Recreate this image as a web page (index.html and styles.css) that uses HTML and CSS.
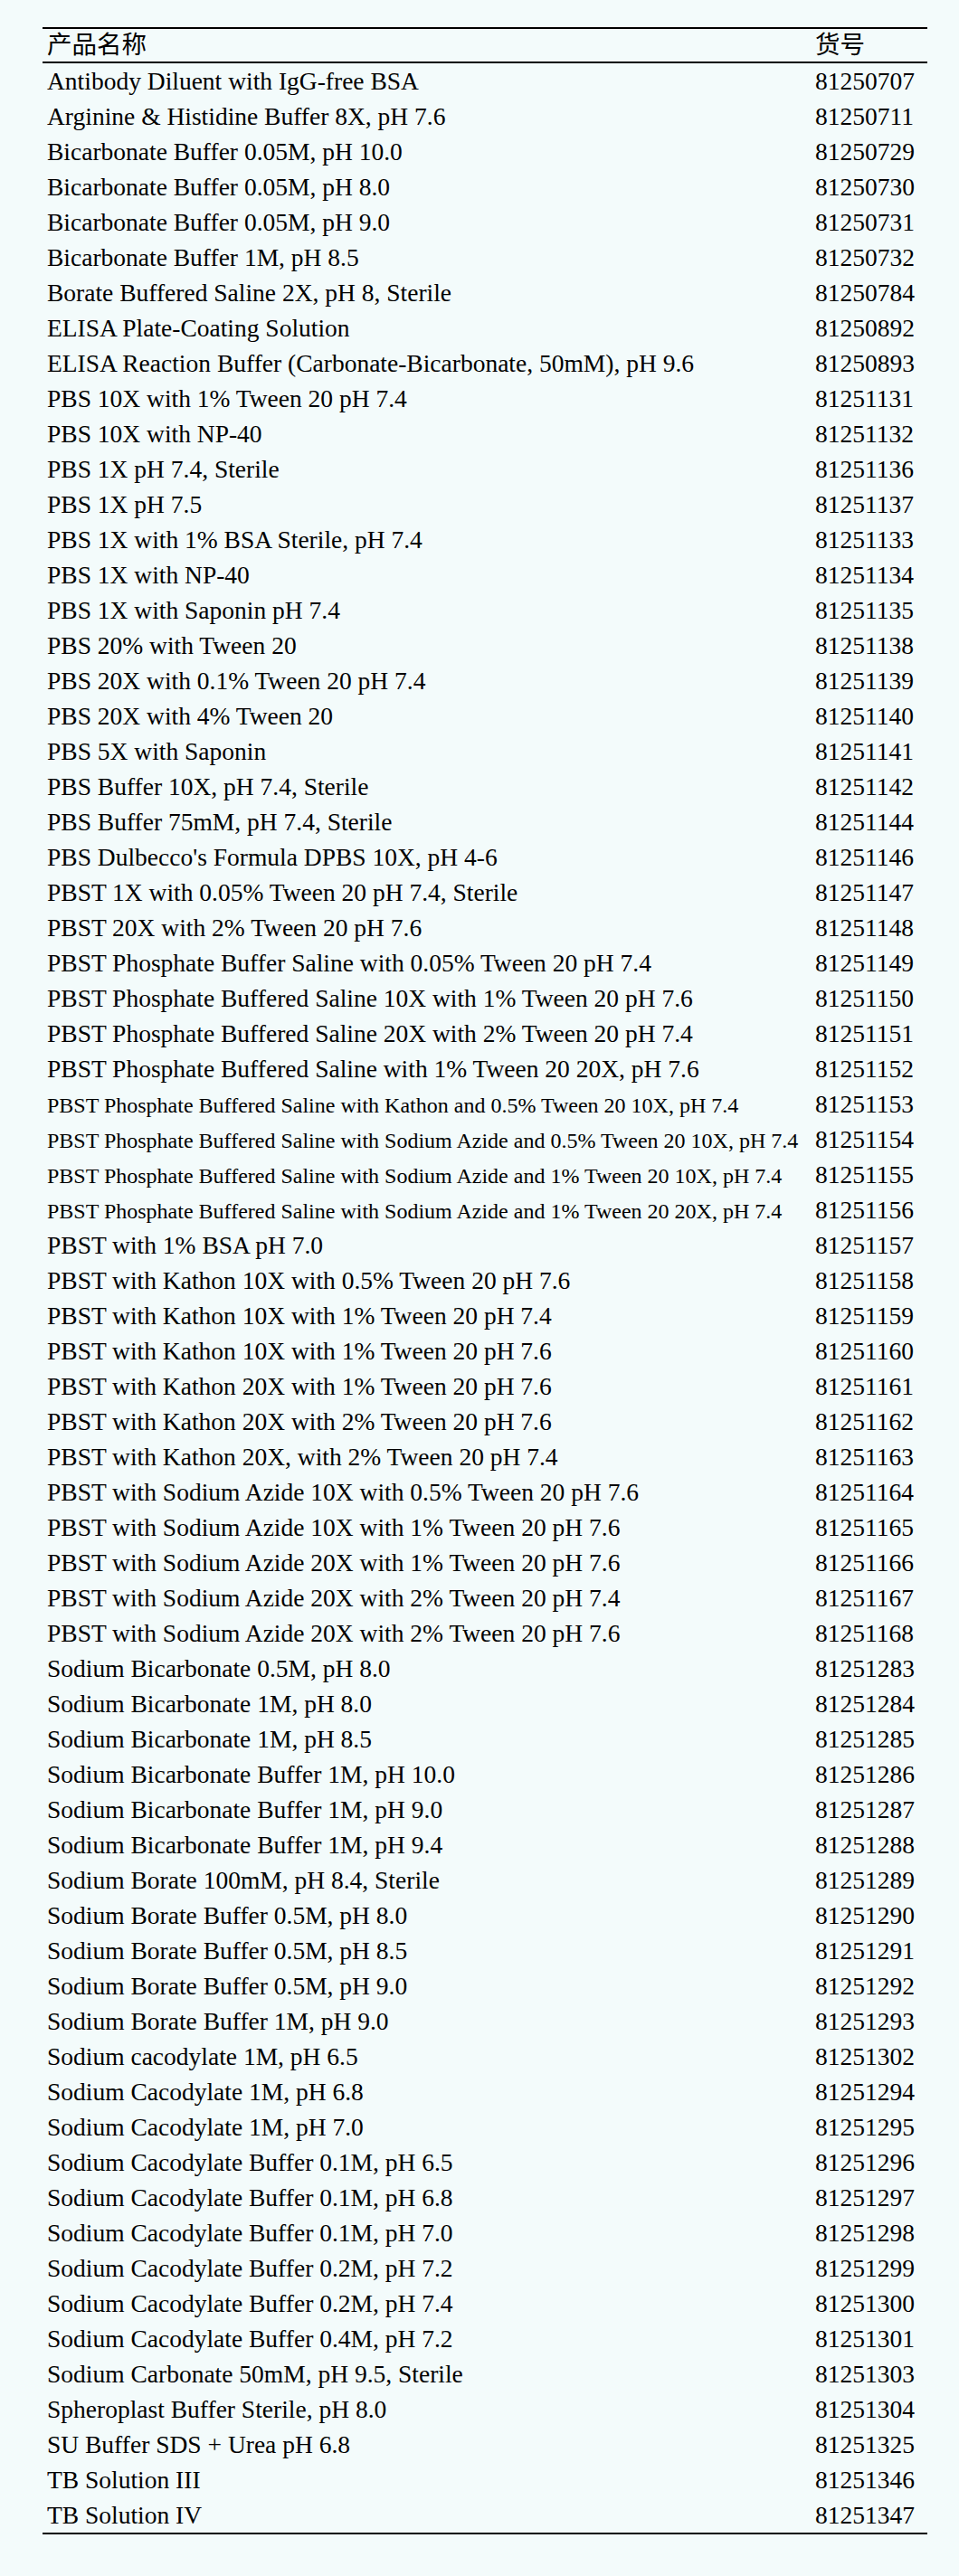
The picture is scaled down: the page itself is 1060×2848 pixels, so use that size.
FILE: index.html
```html
<!DOCTYPE html>
<html lang="zh-CN">
<head>
<meta charset="utf-8">
<title>产品列表</title>
<link rel="stylesheet" href="styles.css">
</head>
<body>
<table class="product-table">
  <colgroup>
    <col class="col-name">
    <col class="col-code">
  </colgroup>
  <thead>
    <tr><th>产品名称</th><th>货号</th></tr>
  </thead>
  <tbody>
    <tr><td>Antibody Diluent with IgG-free BSA</td><td>81250707</td></tr>
    <tr><td>Arginine &amp; Histidine Buffer 8X, pH 7.6</td><td>81250711</td></tr>
    <tr><td>Bicarbonate Buffer 0.05M, pH 10.0</td><td>81250729</td></tr>
    <tr><td>Bicarbonate Buffer 0.05M, pH 8.0</td><td>81250730</td></tr>
    <tr><td>Bicarbonate Buffer 0.05M, pH 9.0</td><td>81250731</td></tr>
    <tr><td>Bicarbonate Buffer 1M, pH 8.5</td><td>81250732</td></tr>
    <tr><td>Borate Buffered Saline 2X, pH 8, Sterile</td><td>81250784</td></tr>
    <tr><td>ELISA Plate-Coating Solution</td><td>81250892</td></tr>
    <tr><td>ELISA Reaction Buffer (Carbonate-Bicarbonate, 50mM), pH 9.6</td><td>81250893</td></tr>
    <tr><td>PBS 10X with 1% Tween 20 pH 7.4</td><td>81251131</td></tr>
    <tr><td>PBS 10X with NP-40</td><td>81251132</td></tr>
    <tr><td>PBS 1X pH 7.4, Sterile</td><td>81251136</td></tr>
    <tr><td>PBS 1X pH 7.5</td><td>81251137</td></tr>
    <tr><td>PBS 1X with 1% BSA Sterile, pH 7.4</td><td>81251133</td></tr>
    <tr><td>PBS 1X with NP-40</td><td>81251134</td></tr>
    <tr><td>PBS 1X with Saponin pH 7.4</td><td>81251135</td></tr>
    <tr><td>PBS 20% with Tween 20</td><td>81251138</td></tr>
    <tr><td>PBS 20X with 0.1% Tween 20 pH 7.4</td><td>81251139</td></tr>
    <tr><td>PBS 20X with 4% Tween 20</td><td>81251140</td></tr>
    <tr><td>PBS 5X with Saponin</td><td>81251141</td></tr>
    <tr><td>PBS Buffer 10X, pH 7.4, Sterile</td><td>81251142</td></tr>
    <tr><td>PBS Buffer 75mM, pH 7.4, Sterile</td><td>81251144</td></tr>
    <tr><td>PBS Dulbecco's Formula DPBS 10X, pH 4-6</td><td>81251146</td></tr>
    <tr><td>PBST 1X with 0.05% Tween 20 pH 7.4, Sterile</td><td>81251147</td></tr>
    <tr><td>PBST 20X with 2% Tween 20 pH 7.6</td><td>81251148</td></tr>
    <tr><td>PBST Phosphate Buffer Saline with 0.05% Tween 20 pH 7.4</td><td>81251149</td></tr>
    <tr><td>PBST Phosphate Buffered Saline 10X with 1% Tween 20 pH 7.6</td><td>81251150</td></tr>
    <tr><td>PBST Phosphate Buffered Saline 20X with 2% Tween 20 pH 7.4</td><td>81251151</td></tr>
    <tr><td>PBST Phosphate Buffered Saline with 1% Tween 20 20X, pH 7.6</td><td>81251152</td></tr>
    <tr><td><span class="small">PBST Phosphate Buffered Saline with Kathon and 0.5% Tween 20 10X, pH 7.4</span></td><td>81251153</td></tr>
    <tr><td><span class="small">PBST Phosphate Buffered Saline with Sodium Azide and 0.5% Tween 20 10X, pH 7.4</span></td><td>81251154</td></tr>
    <tr><td><span class="small">PBST Phosphate Buffered Saline with Sodium Azide and 1% Tween 20 10X, pH 7.4</span></td><td>81251155</td></tr>
    <tr><td><span class="small">PBST Phosphate Buffered Saline with Sodium Azide and 1% Tween 20 20X, pH 7.4</span></td><td>81251156</td></tr>
    <tr><td>PBST with 1% BSA pH 7.0</td><td>81251157</td></tr>
    <tr><td>PBST with Kathon 10X with 0.5% Tween 20 pH 7.6</td><td>81251158</td></tr>
    <tr><td>PBST with Kathon 10X with 1% Tween 20 pH 7.4</td><td>81251159</td></tr>
    <tr><td>PBST with Kathon 10X with 1% Tween 20 pH 7.6</td><td>81251160</td></tr>
    <tr><td>PBST with Kathon 20X with 1% Tween 20 pH 7.6</td><td>81251161</td></tr>
    <tr><td>PBST with Kathon 20X with 2% Tween 20 pH 7.6</td><td>81251162</td></tr>
    <tr><td>PBST with Kathon 20X, with 2% Tween 20 pH 7.4</td><td>81251163</td></tr>
    <tr><td>PBST with Sodium Azide 10X with 0.5% Tween 20 pH 7.6</td><td>81251164</td></tr>
    <tr><td>PBST with Sodium Azide 10X with 1% Tween 20 pH 7.6</td><td>81251165</td></tr>
    <tr><td>PBST with Sodium Azide 20X with 1% Tween 20 pH 7.6</td><td>81251166</td></tr>
    <tr><td>PBST with Sodium Azide 20X with 2% Tween 20 pH 7.4</td><td>81251167</td></tr>
    <tr><td>PBST with Sodium Azide 20X with 2% Tween 20 pH 7.6</td><td>81251168</td></tr>
    <tr><td>Sodium Bicarbonate 0.5M, pH 8.0</td><td>81251283</td></tr>
    <tr><td>Sodium Bicarbonate 1M, pH 8.0</td><td>81251284</td></tr>
    <tr><td>Sodium Bicarbonate 1M, pH 8.5</td><td>81251285</td></tr>
    <tr><td>Sodium Bicarbonate Buffer 1M, pH 10.0</td><td>81251286</td></tr>
    <tr><td>Sodium Bicarbonate Buffer 1M, pH 9.0</td><td>81251287</td></tr>
    <tr><td>Sodium Bicarbonate Buffer 1M, pH 9.4</td><td>81251288</td></tr>
    <tr><td>Sodium Borate 100mM, pH 8.4, Sterile</td><td>81251289</td></tr>
    <tr><td>Sodium Borate Buffer 0.5M, pH 8.0</td><td>81251290</td></tr>
    <tr><td>Sodium Borate Buffer 0.5M, pH 8.5</td><td>81251291</td></tr>
    <tr><td>Sodium Borate Buffer 0.5M, pH 9.0</td><td>81251292</td></tr>
    <tr><td>Sodium Borate Buffer 1M, pH 9.0</td><td>81251293</td></tr>
    <tr><td>Sodium cacodylate 1M, pH 6.5</td><td>81251302</td></tr>
    <tr><td>Sodium Cacodylate 1M, pH 6.8</td><td>81251294</td></tr>
    <tr><td>Sodium Cacodylate 1M, pH 7.0</td><td>81251295</td></tr>
    <tr><td>Sodium Cacodylate Buffer 0.1M, pH 6.5</td><td>81251296</td></tr>
    <tr><td>Sodium Cacodylate Buffer 0.1M, pH 6.8</td><td>81251297</td></tr>
    <tr><td>Sodium Cacodylate Buffer 0.1M, pH 7.0</td><td>81251298</td></tr>
    <tr><td>Sodium Cacodylate Buffer 0.2M, pH 7.2</td><td>81251299</td></tr>
    <tr><td>Sodium Cacodylate Buffer 0.2M, pH 7.4</td><td>81251300</td></tr>
    <tr><td>Sodium Cacodylate Buffer 0.4M, pH 7.2</td><td>81251301</td></tr>
    <tr><td>Sodium Carbonate 50mM, pH 9.5, Sterile</td><td>81251303</td></tr>
    <tr><td>Spheroplast Buffer Sterile, pH 8.0</td><td>81251304</td></tr>
    <tr><td>SU Buffer SDS + Urea pH 6.8</td><td>81251325</td></tr>
    <tr><td>TB Solution III</td><td>81251346</td></tr>
    <tr><td>TB Solution IV</td><td>81251347</td></tr>
  </tbody>
</table>
</body>
</html>
```
FILE: styles.css
```css
html, body {
  margin: 0;
  padding: 0;
  background: #f3fbfb;
}

body {
  padding: 30px 0 40px 47px;
  color: #000;
  font-family: "Liberation Serif", "Times New Roman", "Noto Sans CJK SC", serif;
  font-size: 27.5px;
}

.product-table {
  width: 978px;
  table-layout: fixed;
  border-collapse: separate;
  border-spacing: 0;
  border-bottom: 2px solid #000;
}

.col-name { width: 849px; }
.col-code { width: 129px; }

.product-table th {
  font-weight: normal;
  text-align: left;
  font-family: "Liberation Serif", "Noto Sans CJK SC", serif;
  font-size: 27.5px;
  line-height: 36px;
  padding: 0 5px;
  border-top: 2px solid #000;
  border-bottom: 2px solid #000;
  vertical-align: middle;
}

.product-table td {
  padding: 0 5px;
  line-height: 39px;
  white-space: nowrap;
  vertical-align: middle;
}

.small {
  font-size: 24px;
  line-height: 1;
}
```
